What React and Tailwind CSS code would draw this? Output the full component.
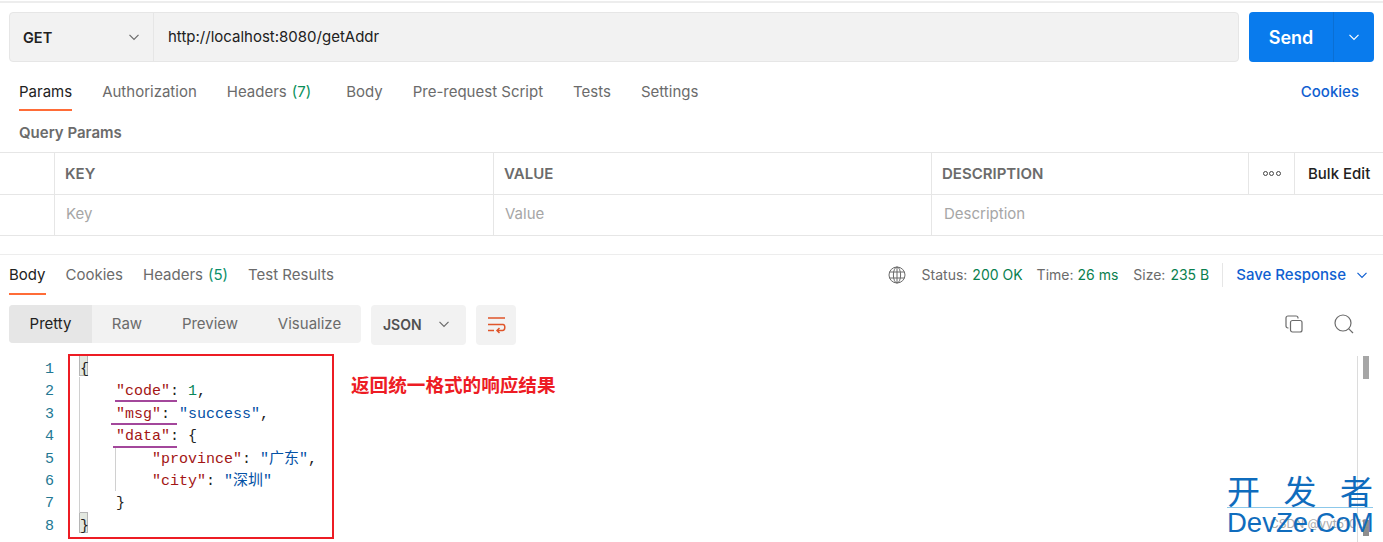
import React from "react";

const Chevron = ({ className = "", color = "#6b6b6b" }) => (
  <svg className={className} width="12" height="12" viewBox="0 0 12 12" fill="none" stroke={color} strokeWidth="1.2">
    <path d="M1.5 3.8 L6 8.3 L10.5 3.8" />
  </svg>
);

const K = ({ children }) => <span className="text-[#a31515]">{children}</span>;
const S = ({ children }) => <span className="text-[#0451a5]">{children}</span>;
const P = ({ children }) => <span className="text-[#222]">{children}</span>;

const Match = ({ children }) => (
  <span className="relative text-[#222]">
    <span className="absolute left-[-1px] -top-[6px] w-[9px] h-[21px] -z-10 bg-[#e3e8e0] border border-[#b5b5b5]" />
    {children}
  </span>
);

const lines = [
  <Match>{"{"}</Match>,
  <span>{"    "}<K>"code"</K><P>: </P><span className="text-[#098658]">1</span><P>,</P></span>,
  <span>{"    "}<K>"msg"</K><P>: </P><S>"success"</S><P>,</P></span>,
  <span>{"    "}<K>"data"</K><P>: {"{"}</P></span>,
  <span>{"        "}<K>"province"</K><P>: </P><S>"广东"</S><P>,</P></span>,
  <span>{"        "}<K>"city"</K><P>: </P><S>"深圳"</S></span>,
  <span>{"    "}<P>{"}"}</P></span>,
  <Match>{"}"}</Match>,
];

function Tab({ children, active, count, countColor }) {
  return (
    <div className={`h-full flex items-center pt-[2px] border-b-2 ${active ? "border-[#ff6c37] text-[#212121]" : "border-transparent text-[#6b6b6b]"}`}>
      {children}
      {count && <span className={`ml-[5px] ${countColor}`}>{count}</span>}
    </div>
  );
}

export default function App() {
  return (
    <div className="relative w-[1383px] h-[542px] overflow-hidden bg-white font-['Inter','Noto_Sans_CJK_SC',sans-serif] text-[15px] text-[#212121]">
      <div className="h-[12px] pt-px">
        <div className="h-[2px] bg-[#ededed]" />
      </div>

      {/* URL bar */}
      <div className="flex h-[50px] pl-[9px] pr-[9px] gap-[10px]">
        <div className="flex-1 flex bg-[#f2f2f2] border border-[#e6e6e6] rounded-[4px]">
          <div className="w-[144px] flex items-center justify-between pl-[13px] pr-[13px] border-r border-[#e6e6e6] font-semibold text-[#212121] text-[14.5px]">
            <span className="pt-[2px]">GET</span>
            <Chevron />
          </div>
          <div className="flex-1 flex items-center pl-[14px] text-[#212121]">http://localhost:8080/getAddr</div>
        </div>
        <div className="w-[125px] flex bg-[#097bed] rounded-[4px] text-white">
          <div className="w-[85px] flex items-center justify-center text-[18px] font-semibold border-r border-[#0a6fd4]">Send</div>
          <div className="flex-1 flex items-center justify-center"><Chevron color="#ffffff" /></div>
        </div>
      </div>

      {/* Request tabs */}
      <div className="flex items-center h-[38px] mt-[11px] pl-[19px] pr-[24px] justify-between">
        <div className="flex h-full gap-[30px]">
          <Tab active>Params</Tab>
          <Tab>Authorization</Tab>
          <div className="mr-[5px] h-full">
            <Tab count="(7)" countColor="text-[#0a8f5a]">Headers</Tab>
          </div>
          <Tab>Body</Tab>
          <Tab>Pre-request Script</Tab>
          <Tab>Tests</Tab>
          <Tab>Settings</Tab>
        </div>
        <div className="text-[#0f5fd1] font-medium">Cookies</div>
      </div>

      <div className="h-[41px] pl-[19px] pt-[11px] font-semibold text-[#6b6b6b]">Query Params</div>

      {/* Table */}
      <div className="border-t border-[#e6e6e6]">
        <div className="flex h-[42px] border-b border-[#e6e6e6] font-semibold text-[#6b6b6b]">
          <div className="w-[55px] border-r border-[#e6e6e6]" />
          <div className="w-[439px] border-r border-[#e6e6e6] flex items-center pl-[10px] pt-[2px]">KEY</div>
          <div className="w-[438px] border-r border-[#e6e6e6] flex items-center pl-[10px] pt-[2px]">VALUE</div>
          <div className="w-[317px] border-r border-[#e6e6e6] flex items-center pl-[10px] pt-[2px]">DESCRIPTION</div>
          <div className="w-[46px] border-r border-[#e6e6e6] flex items-center justify-center gap-[1.5px]">
            <span className="w-[5px] h-[5px] rounded-full border border-[#444]" />
            <span className="w-[5px] h-[5px] rounded-full border border-[#444]" />
            <span className="w-[5px] h-[5px] rounded-full border border-[#444]" />
          </div>
          <div className="flex-1 flex items-center pl-[13px] pt-[2px] font-medium text-[#212121]">Bulk Edit</div>
        </div>
        <div className="flex h-[41px] border-b border-[#e6e6e6] text-[#a6a6a6]">
          <div className="w-[55px] border-r border-[#e6e6e6]" />
          <div className="w-[439px] border-r border-[#e6e6e6] flex items-center pl-[11px] pb-[2px]">Key</div>
          <div className="w-[438px] border-r border-[#e6e6e6] flex items-center pl-[11px] pb-[2px]">Value</div>
          <div className="flex-1 flex items-center pl-[12px] pb-[2px]">Description</div>
        </div>
      </div>

      {/* Response header */}
      <div className="mt-[18px] border-t border-[#ededed] h-[40px] flex items-stretch justify-between pl-[9px] pr-[15px]">
        <div className="flex gap-[20px] h-[40px]">
          <Tab active>Body</Tab>
          <Tab>Cookies</Tab>
          <Tab count="(5)" countColor="text-[#0a8f6a]">Headers</Tab>
          <Tab>Test Results</Tab>
        </div>
        <div className="flex items-center text-[14px] text-[#6b6b6b] h-[39px]">
          <svg width="18" height="18" viewBox="0 0 18 18" fill="none" stroke="#6b6b6b" strokeWidth="1" className="mr-[16px]">
            <circle cx="9" cy="9" r="8" />
            <ellipse cx="9" cy="9" rx="3.6" ry="8" />
            <path d="M9 1V17M1.6 6H16.4M1.6 12H16.4" />
          </svg>
          <span>Status:</span><span className="ml-[5px] text-[#0a7f4f]">200 OK</span>
          <span className="ml-[14px]">Time:</span><span className="ml-[4px] text-[#0a7f4f]">26 ms</span>
          <span className="ml-[15px]">Size:</span><span className="ml-[5px] text-[#0a7f4f]">235 B</span>
          <div className="w-px h-[24px] bg-[#e6e6e6] mx-[13px]" />
          <span className="text-[#0f5fd1] font-medium text-[15px] pt-[2px]">Save Response</span>
          <Chevron className="ml-[10px]" color="#0f5fd1" />
        </div>
      </div>

      {/* Toolbar */}
      <div className="mt-[11px] h-[39px] flex pl-[9px] pr-[29px] items-start">
        <div className="flex h-[38px] bg-[#f2f2f2] rounded-[4px] text-[#6b6b6b]">
          <div className="w-[83px] flex items-center justify-center bg-[#e6e6e6] rounded-l-[4px] text-[#212121]">Pretty</div>
          <div className="w-[70px] flex items-center justify-center">Raw</div>
          <div className="w-[96px] flex items-center justify-center">Preview</div>
          <div className="w-[103px] flex items-center justify-center">Visualize</div>
        </div>
        <div className="ml-[10px] w-[95px] h-[40px] bg-[#f2f2f2] rounded-[4px] flex items-center justify-between pl-[12px] pr-[16px] pb-[2px] font-semibold text-[#505050] text-[14px]">
          <span>JSON</span>
          <Chevron />
        </div>
        <div className="ml-[10px] w-[40px] h-[40px] bg-[#f2f2f2] rounded-[4px] flex items-center justify-center">
          <svg width="20" height="18" viewBox="0 0 20 18" fill="none" stroke="#e0552a" strokeWidth="1.5">
            <path d="M2 2H19M2 8.5H17C19.5 8.5 19.5 14.5 16.5 14.5H11M13.5 12L11 14.5L13.5 17M2 14.5H8" />
          </svg>
        </div>
        <div className="ml-auto flex items-center gap-[31px] h-[38px]">
          <svg width="18" height="18" viewBox="0 0 18 18" fill="none" stroke="#6b6b6b" strokeWidth="1.2">
            <rect x="5.5" y="5.5" width="11.5" height="11.5" rx="2" />
            <path d="M3.5 13H3C1.8 13 1 12.2 1 11V3C1 1.8 1.8 1 3 1H11C12.2 1 13 1.8 13 3V3.5" />
          </svg>
          <svg width="20" height="20" viewBox="0 0 20 20" fill="none" stroke="#6b6b6b" strokeWidth="1.2">
            <circle cx="9" cy="9" r="8" />
            <path d="M14.8 14.8L19 19" />
          </svg>
        </div>
      </div>

      {/* Code */}
      <div className="relative isolate mt-[12px] flex font-['Liberation_Mono','Noto_Sans_CJK_SC',monospace] text-[15px] leading-[22.4px] pt-[3px]">
        <div className="w-[54px] text-right text-[#237893]">
          {lines.map((_, i) => <div key={i}>{i + 1}</div>)}
        </div>
        <div className="ml-[26px] whitespace-pre">
          {lines.map((l, i) => <div key={i}>{l}</div>)}
        </div>
        <div className="absolute left-[79px] top-[21px] w-px h-[136px] bg-[#d0d0d0]" />
        <div className="absolute left-[115px] top-[90px] w-px h-[45px] bg-[#d0d0d0]" />
        <div className="absolute left-[1363px] top-0 w-[6px] h-[23px] bg-[#a6a6a6]" />
        <div className="absolute left-[1357px] top-0 w-px h-[190px] bg-[#dcdcdc]" />
      </div>

      {/* Annotations */}
      <div className="absolute left-[68px] top-[354px] w-[266px] h-[185px] border-2 border-[#ed1c24]" />
      <div className="absolute left-[115px] top-[400px] w-[62px] h-[2px] bg-[#a3479b]" />
      <div className="absolute left-[111px] top-[423px] w-[66px] h-[2px] bg-[#a3479b]" />
      <div className="absolute left-[113px] top-[446px] w-[64px] h-[2px] bg-[#a3479b]" />
      <div className="absolute left-[351px] top-[372px] text-[#ed1c24] font-bold text-[18.6px] leading-[24px] font-['Noto_Sans_CJK_SC',sans-serif]">返回统一格式的响应结果</div>

      {/* Watermark */}
      <div className="absolute left-[1363px] top-[520px] w-[6px] h-[16px] bg-[#8e8e8e]" />
      <div className="absolute left-[1270px] top-[517px] text-[12px] leading-[14px] text-[#8a8a8a] opacity-70 whitespace-nowrap">CSDN @yyt51012</div>
      <div className="absolute left-[1227px] top-[473px] w-[146px] text-[#0f6cbd] font-['Noto_Sans_CJK_SC',sans-serif]">
        <div className="flex justify-between text-[33px] leading-[35px] border-b border-[#8cc8ea] h-[35px]">
          <span>开</span><span>发</span><span>者</span>
        </div>
        <div className="text-[27.5px] leading-[30px] font-['Liberation_Sans',sans-serif] whitespace-nowrap">DevZe.CoM</div>
      </div>
    </div>
  );
}
